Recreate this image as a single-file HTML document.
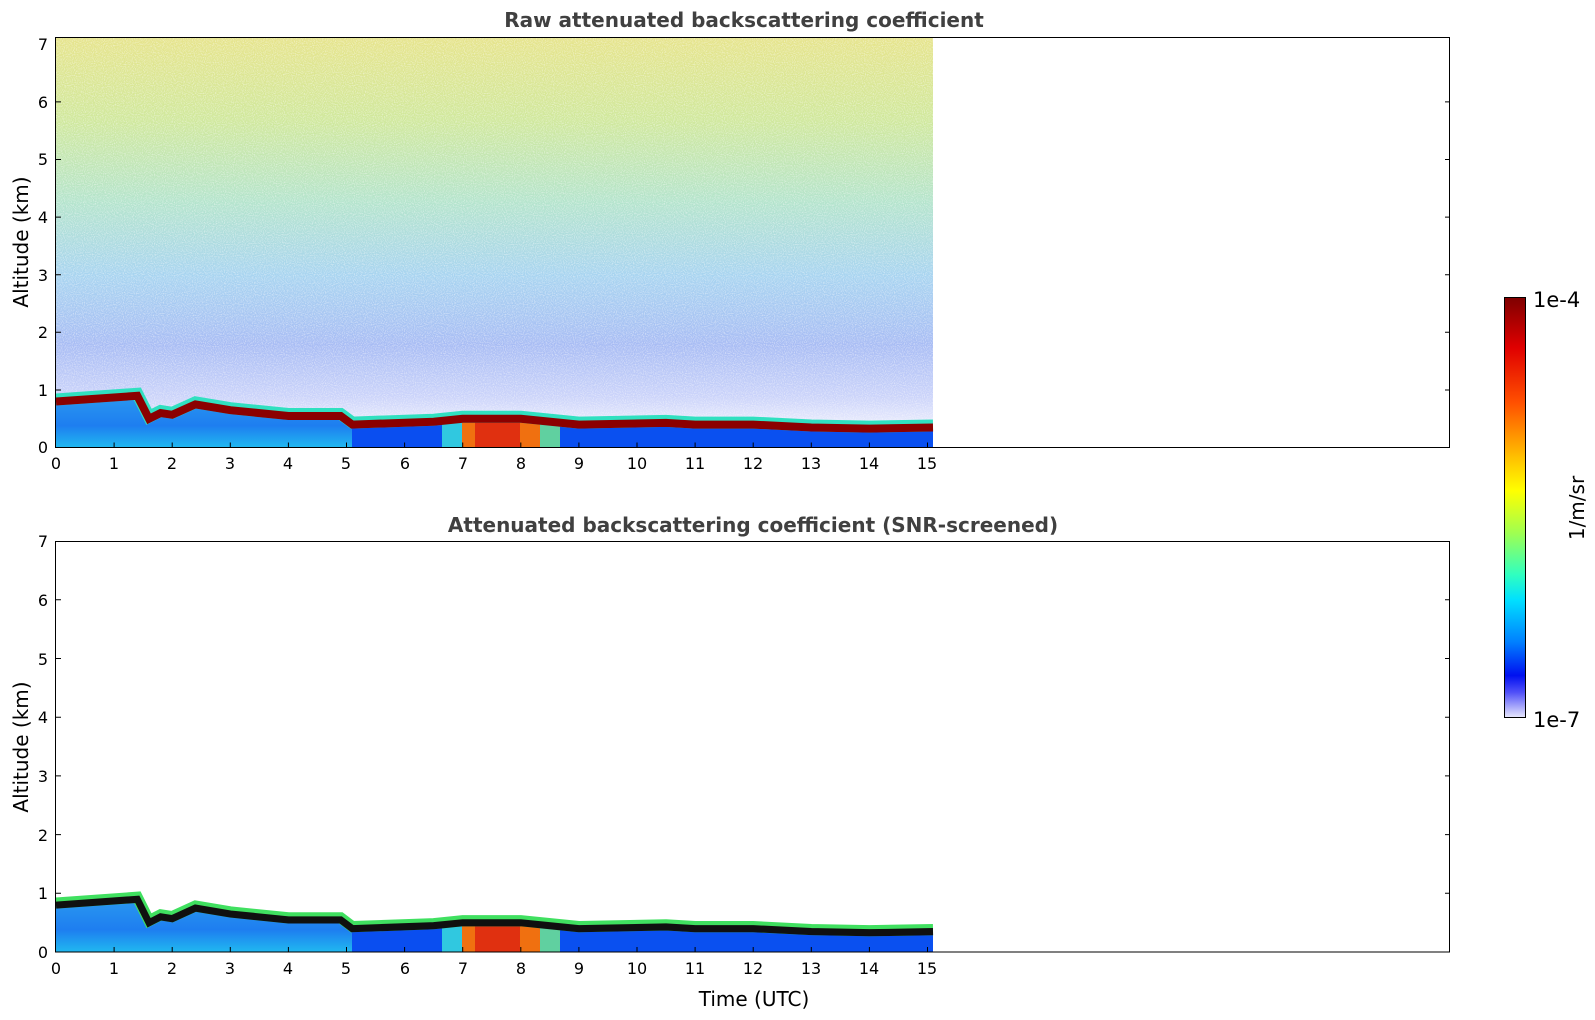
<!DOCTYPE html>
<html><head><meta charset="utf-8"><style>
html,body{margin:0;padding:0;background:#fff;width:1595px;height:1020px;overflow:hidden}
text{font-family:"DejaVu Sans","Liberation Sans",sans-serif}
</style></head><body>
<svg width="1595" height="1020" viewBox="0 0 1595 1020" xmlns="http://www.w3.org/2000/svg">
<defs>
<linearGradient id="noise" x1="0" y1="0" x2="0" y2="1">
<stop offset="0" stop-color="#e6e48c"/>
<stop offset="0.2" stop-color="#d0e89c"/>
<stop offset="0.4" stop-color="#b4e4cc"/>
<stop offset="0.58" stop-color="#a8d4f0"/>
<stop offset="0.75" stop-color="#a8bcf4"/>
<stop offset="0.88" stop-color="#ccd4fa"/>
<stop offset="0.95" stop-color="#eceefd"/>
<stop offset="1" stop-color="#eceefd"/>
</linearGradient>
<linearGradient id="pbl" x1="0" y1="0" x2="0" y2="1">
<stop offset="0" stop-color="#2a9af0"/>
<stop offset="0.6" stop-color="#1e7ef0"/>
<stop offset="1" stop-color="#20b8f0"/>
</linearGradient>
<linearGradient id="cb" x1="0" y1="0" x2="0" y2="1">
<stop offset="0" stop-color="#7f0000"/>
<stop offset="0.12" stop-color="#e00000"/>
<stop offset="0.25" stop-color="#ff5000"/>
<stop offset="0.38" stop-color="#ffc000"/>
<stop offset="0.46" stop-color="#ffff00"/>
<stop offset="0.56" stop-color="#a0ff50"/>
<stop offset="0.66" stop-color="#30ffc0"/>
<stop offset="0.72" stop-color="#00e0ff"/>
<stop offset="0.82" stop-color="#0080ff"/>
<stop offset="0.9" stop-color="#0010f0"/>
<stop offset="0.94" stop-color="#5050f8"/>
<stop offset="1" stop-color="#e8e8fc"/>
</linearGradient>
<filter id="spk" x="0" y="0" width="1" height="1">
<feTurbulence type="fractalNoise" baseFrequency="0.9" numOctaves="1" seed="3"/>
<feColorMatrix type="matrix" values="0 0 0 0 1  0 0 0 0 1  0 0 0 0 1  0 0 0 -2.5 1.45"/>
</filter>
<g id="layer">
<polygon fill="url(#pbl)" points="56,398.5 137.3,392.8 149,415.8 160.6,410 172.2,411.8 195.4,401.4 230.3,407.2 288.4,413 340.7,413 352.3,421.6 433.7,418.7 462.7,415.8 520.8,415.8 578.9,421.6 666,419.9 695.1,421.6 753.2,421.6 811.3,424.5 869.4,425.6 933,424.5 933,447.5 56,447.5"/>
<rect x="352" y="422" width="90" height="25.5" fill="#0a4ef0"/>
<rect x="560" y="424" width="373" height="23.5" fill="#0a50f0"/>
<rect x="442" y="418" width="40" height="29.5" fill="#30c8e0"/>
<rect x="462" y="416" width="80" height="31.5" fill="#f07010"/>
<rect x="475" y="420" width="45" height="27.5" fill="#e03010"/>
<rect x="540" y="418" width="20" height="29.5" fill="#60d0a0"/>
</g>
<polyline id="line" fill="none" points="56,398.5 137.3,392.8 149,415.8 160.6,410 172.2,411.8 195.4,401.4 230.3,407.2 288.4,413 340.7,413 352.3,421.6 433.7,418.7 462.7,415.8 520.8,415.8 578.9,421.6 666,419.9 695.1,421.6 753.2,421.6 811.3,424.5 869.4,425.6 933,424.5"/>
</defs>

<!-- TOP PANEL -->
<rect x="56" y="38" width="877" height="409" fill="url(#noise)"/>
<rect x="56" y="38" width="877" height="409" fill="#fff" filter="url(#spk)" opacity="0.5"/>
<use href="#layer"/>
<use href="#line" stroke="#30e0c0" stroke-width="12" transform="translate(0,1)"/>
<use href="#line" stroke="#8b0000" stroke-width="8" transform="translate(0,3)"/>
<rect x="55.5" y="37.5" width="1394" height="410" fill="none" stroke="#000" stroke-width="1"/>
<text x="744" y="27" font-size="20" font-weight="bold" fill="#404040" text-anchor="middle">Raw attenuated backscattering coefficient</text>
<text transform="translate(28,242) rotate(-90)" font-size="20" text-anchor="middle" fill="#000">Altitude (km)</text>
<g font-size="16" text-anchor="end" fill="#000">
<text x="48" y="453">0</text><text x="48" y="396">1</text><text x="48" y="338">2</text><text x="48" y="281">3</text><text x="48" y="223">4</text><text x="48" y="165">5</text><text x="48" y="108">6</text><text x="48" y="50">7</text>
</g>
<g stroke="#000" stroke-width="1">
<path d="M56,390h5M56,332.3h5M56,274.7h5M56,217.1h5M56,159.5h5M56,101.9h5M1450,390h-5M1450,332.3h-5M1450,274.7h-5M1450,217.1h-5M1450,159.5h-5M1450,101.9h-5"/>
<path d="M114.1,447.5v-5M172.2,447.5v-5M230.3,447.5v-5M288.4,447.5v-5M346.5,447.5v-5M404.6,447.5v-5M462.7,447.5v-5M520.8,447.5v-5M578.9,447.5v-5M637,447.5v-5M695.1,447.5v-5M753.2,447.5v-5M811.3,447.5v-5M869.4,447.5v-5M927.5,447.5v-5"/>
</g>
<g font-size="16" text-anchor="middle" fill="#000">
<text x="56" y="469">0</text><text x="114" y="469">1</text><text x="172" y="469">2</text><text x="230" y="469">3</text><text x="288" y="469">4</text><text x="346" y="469">5</text><text x="405" y="469">6</text><text x="463" y="469">7</text><text x="521" y="469">8</text><text x="579" y="469">9</text><text x="637" y="469">10</text><text x="695" y="469">11</text><text x="753" y="469">12</text><text x="811" y="469">13</text><text x="869" y="469">14</text><text x="927" y="469">15</text>
</g>

<!-- BOTTOM PANEL -->
<g transform="matrix(1,0,0,1.019,0,496)">
<use href="#layer"/>
<use href="#line" stroke="#40e060" stroke-width="11" transform="translate(0,1)"/>
<use href="#line" stroke="#101010" stroke-width="7" transform="translate(0,3)"/>
</g>
<rect x="55.5" y="541.5" width="1394" height="410.5" fill="none" stroke="#000" stroke-width="1"/>
<text x="753" y="532" font-size="20" font-weight="bold" fill="#404040" text-anchor="middle">Attenuated backscattering coefficient (SNR-screened)</text>
<text transform="translate(28,747) rotate(-90)" font-size="20" text-anchor="middle" fill="#000">Altitude (km)</text>
<g font-size="16" text-anchor="end" fill="#000">
<text x="48" y="958">0</text><text x="48" y="899">1</text><text x="48" y="841">2</text><text x="48" y="782">3</text><text x="48" y="723">4</text><text x="48" y="665">5</text><text x="48" y="606">6</text><text x="48" y="547">7</text>
</g>
<g stroke="#000" stroke-width="1">
<path d="M56,893.3h5M56,834.6h5M56,775.9h5M56,717.2h5M56,658.5h5M56,599.8h5M1450,893.3h-5M1450,834.6h-5M1450,775.9h-5M1450,717.2h-5M1450,658.5h-5M1450,599.8h-5"/>
<path d="M114.1,952v-5M172.2,952v-5M230.3,952v-5M288.4,952v-5M346.5,952v-5M404.6,952v-5M462.7,952v-5M520.8,952v-5M578.9,952v-5M637,952v-5M695.1,952v-5M753.2,952v-5M811.3,952v-5M869.4,952v-5M927.5,952v-5"/>
</g>
<g font-size="16" text-anchor="middle" fill="#000">
<text x="56" y="974">0</text><text x="114" y="974">1</text><text x="172" y="974">2</text><text x="230" y="974">3</text><text x="288" y="974">4</text><text x="346" y="974">5</text><text x="405" y="974">6</text><text x="463" y="974">7</text><text x="521" y="974">8</text><text x="579" y="974">9</text><text x="637" y="974">10</text><text x="695" y="974">11</text><text x="753" y="974">12</text><text x="811" y="974">13</text><text x="869" y="974">14</text><text x="927" y="974">15</text>
</g>
<text x="754" y="1006" font-size="20" text-anchor="middle" fill="#000">Time (UTC)</text>

<!-- COLORBAR -->
<rect x="1504.5" y="297.5" width="21" height="420" fill="url(#cb)" stroke="#000" stroke-width="1"/>
<text x="1533" y="307" font-size="21" fill="#000">1e-4</text>
<text x="1533" y="727" font-size="21" fill="#000">1e-7</text>
<text transform="translate(1584,508) rotate(-90)" font-size="20" text-anchor="middle" fill="#000">1/m/sr</text>
</svg>
</body></html>
